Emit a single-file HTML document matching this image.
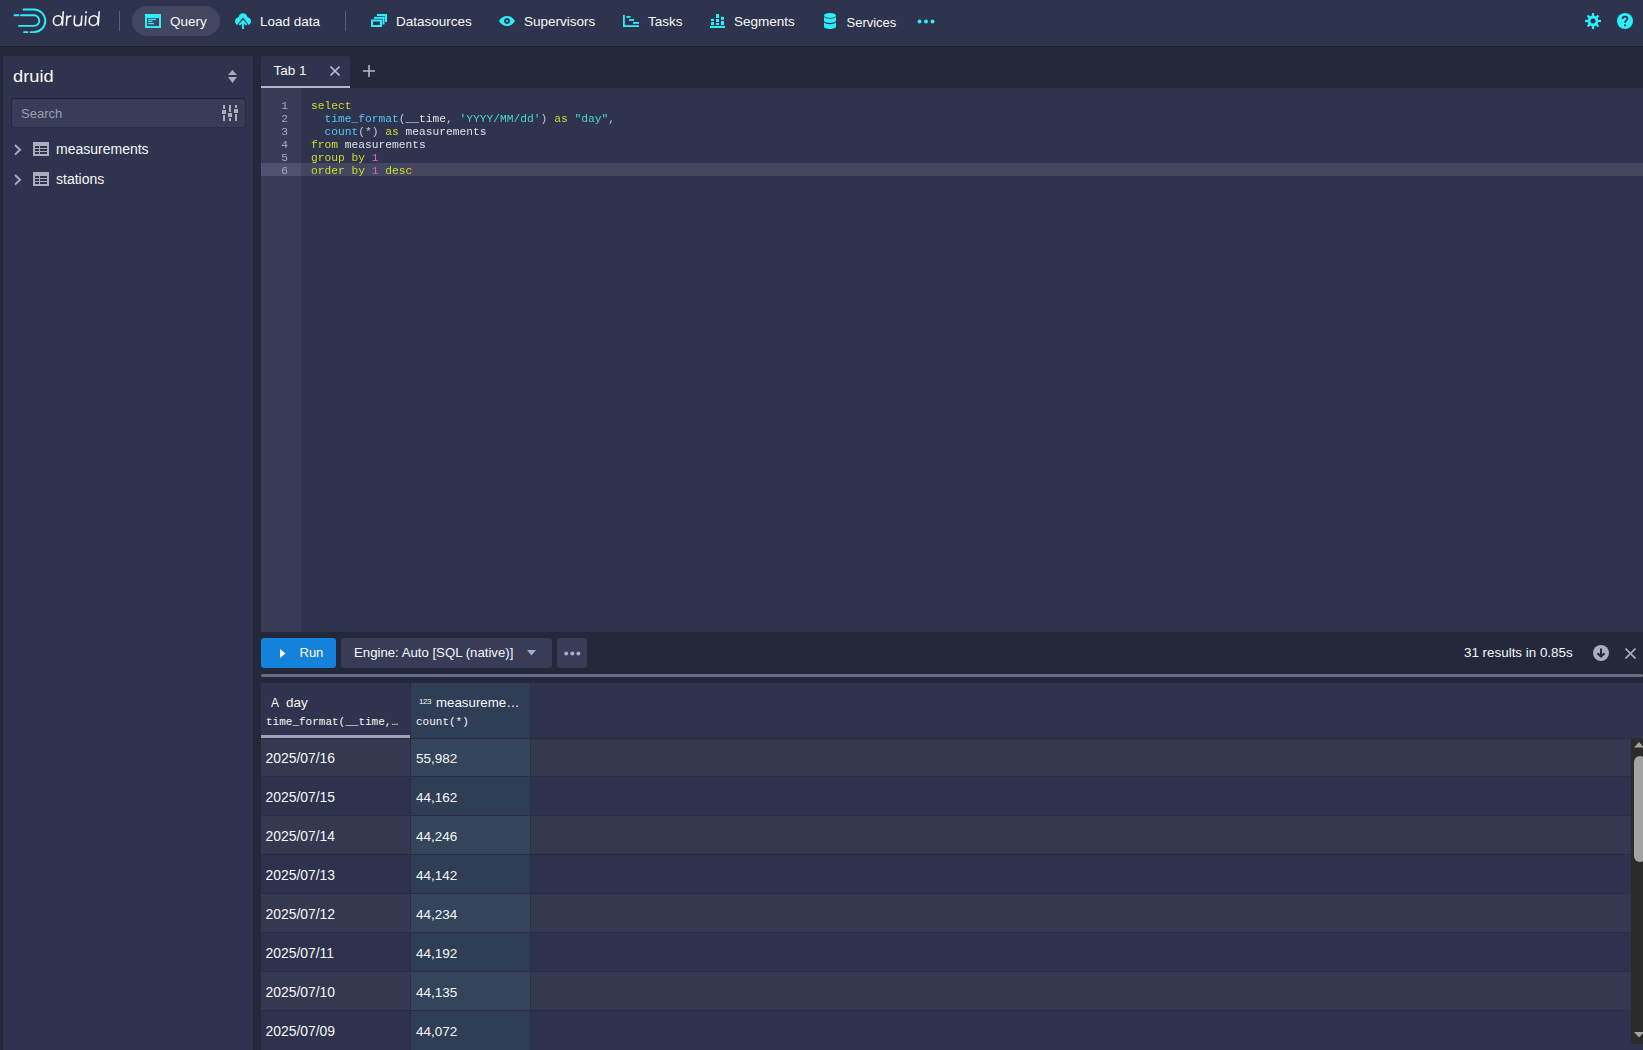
<!DOCTYPE html>
<html><head><meta charset="utf-8">
<style>
*{margin:0;padding:0;box-sizing:border-box}
html,body{width:1643px;height:1050px;overflow:hidden;background:#24283b;font-family:"Liberation Sans",sans-serif;color:#f5f8fa}
.a{position:absolute}
.t{position:absolute;white-space:nowrap;line-height:1}
svg{position:absolute;display:block}
.mono{font-family:"Liberation Mono",monospace}
#nav{left:0;top:0;width:1643px;height:46px;background:#2f344e;box-shadow:0 1px 1px rgba(16,18,30,.35)}
.nt{font-size:13.5px;color:#f5f8fa;top:15px}
.code{font-family:"Liberation Mono",monospace;font-size:11.25px;line-height:13px;color:#dde0ea;left:311px;white-space:pre;will-change:transform}
.kw{color:#cddc30}.fn{color:#52c6f2}.st{color:#48d6d2}.nu{color:#e35ec8}.pn{color:#c3c6d0}
.ln{font-family:"Liberation Mono",monospace;font-size:11.25px;line-height:13px;color:#a4a8ba;width:27px;text-align:right;left:261px;will-change:transform}
.row{left:261px;width:1370px;height:39px;border-bottom:1px solid #2a2d42}
.c1{font-size:13.9px;left:265.5px}
.c2{font-size:13.5px;left:416px}
</style></head>
<body>
<!-- NAVBAR -->
<div id="nav" class="a"></div>
<svg style="left:10px;top:6px" width="40" height="30" viewBox="0 0 40 30">
  <g fill="none" stroke="#2ceefb" stroke-width="1.9" stroke-linecap="round">
    <path d="M13.5 3.5 H24 A11.3 11.3 0 0 1 24 26.1 H20.5"/>
    <path d="M11 9.3 H24 A5.3 5.3 0 0 1 24 19.9 H9"/>
    <path d="M4.5 9.3 H8.5"/>
    <path d="M14 26.1 H17.5"/>
  </g>
</svg>
<svg style="left:0;top:0" width="110" height="40" viewBox="0 0 110 40">
  <g fill="none" stroke="#f5f8fa" stroke-width="1.55" transform="translate(0,26) skewX(-4) translate(0,-26)">
    <ellipse cx="57.4" cy="20.6" rx="4.4" ry="4.95"/>
    <path d="M62.3 11.2V25.8"/>
    <path d="M66.3 15.4V25.8 M66.3 19.8Q66.9 15.9 70.8 15.9"/>
    <path d="M73.9 15.4V21.4Q73.9 25.6 77.5 25.6Q81.1 25.6 81.1 21.4 M81.1 15.4V25.8"/>
    <path d="M85.2 15.4V25.8"/>
    <path d="M93.4 15.4"/>
    <ellipse cx="93.2" cy="20.6" rx="4.4" ry="4.95"/>
    <path d="M98.2 11.2V25.8"/>
  </g>
  <circle cx="86.1" cy="12.3" r="1" fill="#f5f8fa"/>
</svg>

<div class="a" style="left:119px;top:11px;width:1px;height:20px;background:rgba(255,255,255,.22)"></div>
<div class="a" style="left:132px;top:6px;width:88px;height:30px;border-radius:15px;background:#42465f"></div>
<!-- query icon -->
<svg style="left:145px;top:14px" width="16" height="14" viewBox="0 0 16 14">
  <path fill="#2ceefb" fill-rule="evenodd" d="M0 0H16V14H0Z M2 4V12H14V4Z"/>
  <rect x="3" y="4.8" width="8" height="1.3" fill="#2ceefb"/>
  <rect x="3" y="6.8" width="4.5" height="1.3" fill="#2ceefb"/>
  <rect x="3" y="9" width="6" height="1.3" fill="#2ceefb"/>
</svg>
<div class="t nt" style="left:170px">Query</div>

<!-- load data icon -->
<svg style="left:235px;top:13px" width="16" height="16" viewBox="0 0 16 16">
  <path fill="#2ceefb" d="M8 0.2C5.7 0.2 3.8 2 3.5 4.3 1.5 4.6 0 6.3 0 8.3 0 10 1 11.3 2.2 11.9L8 4.5 13.8 11.9C15 11.3 16 10 16 8.3 16 6.3 14.5 4.6 12.5 4.3 12.2 2 10.3 0.2 8 0.2Z"/>
  <path fill="none" stroke="#2ceefb" stroke-width="1.9" d="M8 8.6V16 M4.4 11.9L8 8.1 11.6 11.9"/>
</svg>
<div class="t nt" style="left:260px">Load data</div>

<div class="a" style="left:345px;top:11px;width:1px;height:20px;background:rgba(255,255,255,.22)"></div>

<!-- datasources icon -->
<svg style="left:371px;top:14px" width="16" height="13" viewBox="0 0 16 13">
  <g fill="#2ceefb">
    <path fill-rule="evenodd" d="M0 5.5H11V13H0Z M2 7.5V11H9V7.5Z"/>
    <rect x="3" y="2.8" width="10.5" height="2"/><rect x="11.5" y="2.8" width="2" height="7.7"/>
    <rect x="6" y="0" width="10" height="2"/><rect x="14" y="0" width="2" height="8"/>
  </g>
</svg>
<div class="t nt" style="left:396px">Datasources</div>

<!-- supervisors eye -->
<svg style="left:499px;top:16px" width="16" height="10" viewBox="0 0 16 10">
  <path fill="#2ceefb" fill-rule="evenodd" d="M0 5C2 1.8 4.8 0 8 0S14 1.8 16 5C14 8.2 11.2 10 8 10S2 8.2 0 5Z M8 2A3 3 0 1 0 8.01 2Z"/>
  <circle cx="8" cy="5" r="1.1" fill="#2ceefb"/>
</svg>
<div class="t nt" style="left:524px">Supervisors</div>

<!-- tasks gantt -->
<svg style="left:623px;top:15px" width="16" height="12" viewBox="0 0 16 12">
  <g fill="#2ceefb">
    <rect x="0" y="0" width="1.8" height="12"/>
    <rect x="0" y="10.2" width="16" height="1.8"/>
    <rect x="3.5" y="1" width="4" height="1.8"/>
    <rect x="6" y="4" width="5" height="1.8"/>
    <rect x="10" y="7" width="6" height="1.8"/>
  </g>
</svg>
<div class="t nt" style="left:648px">Tasks</div>

<!-- segments -->
<svg style="left:710px;top:14px" width="15" height="14" viewBox="0 0 15 14">
  <g fill="#2ceefb">
    <rect x="0" y="11.9" width="15" height="2.1"/>
    <rect x="1" y="4.9" width="3" height="2.1"/><rect x="1" y="8" width="3" height="3"/>
    <rect x="6" y="0" width="3" height="4"/><rect x="6" y="5" width="3" height="3"/><rect x="6" y="9" width="3" height="2"/>
    <rect x="11" y="2.8" width="3" height="3.1"/><rect x="11" y="7" width="3" height="4"/>
  </g>
</svg>
<div class="t nt" style="left:734px">Segments</div>

<!-- services database -->
<svg style="left:824px;top:13px" width="12" height="16" viewBox="0 0 12 16">
  <g fill="#2ceefb">
    <ellipse cx="6" cy="2.5" rx="6" ry="2.5"/>
    <path d="M0 3.8C0.8 5 3.2 5.8 6 5.8S11.2 5 12 3.8V8C11.2 9.2 8.8 10 6 10S0.8 9.2 0 8Z"/>
    <path d="M0 9.3C0.8 10.5 3.2 11.3 6 11.3S11.2 10.5 12 9.3V13.5C12 14.9 9.3 16 6 16S0 14.9 0 13.5Z"/>
  </g>
</svg>
<div class="t nt" style="left:846.5px;font-size:13px;top:15.5px">Services</div>

<svg style="left:917px;top:19px" width="18" height="5" viewBox="0 0 18 5">
  <g fill="#2ceefb"><circle cx="2.5" cy="2.5" r="2"/><circle cx="9" cy="2.5" r="2"/><circle cx="15.5" cy="2.5" r="2"/></g>
</svg>

<!-- gear -->
<svg style="left:1585px;top:13px" width="16" height="16" viewBox="0 0 16 16">
  <g fill="#2ceefb">
    <path fill-rule="evenodd" d="M8 2.6A5.4 5.4 0 1 1 7.99 2.6Z M8 5.4A2.6 2.6 0 1 0 8.01 5.4Z"/>
    <g id="teeth"><rect x="6.9" y="0" width="2.2" height="4"/><rect x="6.9" y="12" width="2.2" height="4"/><rect x="0" y="6.9" width="4" height="2.2"/><rect x="12" y="6.9" width="4" height="2.2"/></g>
    <g transform="rotate(45 8 8)"><rect x="6.9" y="0.3" width="2.2" height="4"/><rect x="6.9" y="11.7" width="2.2" height="4"/><rect x="0.3" y="6.9" width="4" height="2.2"/><rect x="11.7" y="6.9" width="4" height="2.2"/></g>
  </g>
</svg>
<!-- help -->
<svg style="left:1617px;top:13px" width="16" height="16" viewBox="0 0 16 16">
  <circle cx="8" cy="8" r="8" fill="#2ceefb"/>
  <path fill="none" stroke="#2f344e" stroke-width="1.7" d="M5.6 6C5.6 4.6 6.6 3.7 8 3.7S10.4 4.6 10.4 5.9C10.4 7.4 8.1 7.6 8.1 9.5V10"/>
  <rect x="7.1" y="11.3" width="1.9" height="1.9" fill="#2f344e"/>
</svg>

<!-- SIDEBAR -->
<div class="a" style="left:3px;top:56px;width:250px;height:1000px;background:#2f334e;border-radius:2px 2px 0 0"></div>
<div class="t" style="left:13px;top:68px;font-size:17px;transform:scaleX(1.075);transform-origin:0 0">druid</div>
<svg style="left:227px;top:69px" width="11" height="15" viewBox="0 0 11 15">
  <g fill="#a9adc0"><path d="M5.5 1L10 6H1Z"/><path d="M1 8H10L5.5 14Z"/></g>
</svg>
<div class="a" style="left:11px;top:98px;width:235px;height:30px;background:#383c56;border-radius:3px;box-shadow:inset 0 0 0 1px rgba(16,18,30,.35),inset 0 1px 1px rgba(16,18,30,.4)"></div>
<div class="t" style="left:21px;top:107px;font-size:13px;color:#9a9eb3">Search</div>
<svg style="left:222px;top:104px" width="17" height="17" viewBox="0 0 17 17">
  <g fill="#a9adc0">
    <rect x="1" y="1" width="2" height="4"/><rect x="0" y="6" width="4" height="4"/><rect x="1" y="11" width="2" height="6"/>
    <rect x="7" y="1" width="2" height="7"/><rect x="6" y="9" width="4" height="4"/><rect x="7" y="14" width="2" height="3"/>
    <rect x="13" y="1" width="2" height="3"/><rect x="12" y="5" width="4" height="4"/><rect x="13" y="10" width="2" height="7"/>
  </g>
</svg>
<!-- tree -->
<svg style="left:13px;top:144px" width="9" height="12" viewBox="0 0 9 12"><path fill="none" stroke="#a9adc0" stroke-width="1.9" d="M2 1L7 5.8 2 10.6"/></svg>
<svg style="left:33px;top:142px" width="16" height="14" viewBox="0 0 16 14"><path fill="#a9adc0" fill-rule="evenodd" d="M0 0H16V14H0Z M2 4V6H6V4Z M7 4V6H14V4Z M2 7V9H6V7Z M7 7V9H14V7Z M2 10V12H6V10Z M7 10V12H14V10Z"/></svg>
<div class="t" style="left:56px;top:142px;font-size:14px">measurements</div>
<svg style="left:13px;top:174px" width="9" height="12" viewBox="0 0 9 12"><path fill="none" stroke="#a9adc0" stroke-width="1.9" d="M2 1L7 5.8 2 10.6"/></svg>
<svg style="left:33px;top:172px" width="16" height="14" viewBox="0 0 16 14"><path fill="#a9adc0" fill-rule="evenodd" d="M0 0H16V14H0Z M2 4V6H6V4Z M7 4V6H14V4Z M2 7V9H6V7Z M7 7V9H14V7Z M2 10V12H6V10Z M7 10V12H14V10Z"/></svg>
<div class="t" style="left:56px;top:172px;font-size:14px">stations</div>

<!-- TABS -->
<div class="a" style="left:261px;top:56px;width:89px;height:32px;background:#2f334e;border-radius:3px 3px 0 0"></div>
<div class="a" style="left:261px;top:85.5px;width:89px;height:2.5px;background:#b4b8ca"></div>
<div class="t" style="left:273.5px;top:64px;font-size:13.5px">Tab 1</div>
<svg style="left:330px;top:66px" width="10" height="10" viewBox="0 0 10 10"><path stroke="#b4b8ca" stroke-width="1.6" d="M0.5 0.5L9.5 9.5M9.5 0.5L0.5 9.5"/></svg>
<svg style="left:363px;top:65px" width="12" height="12" viewBox="0 0 12 12"><path stroke="#b4b8ca" stroke-width="1.6" d="M6 0V12M0 6H12"/></svg>

<!-- EDITOR -->
<div class="a" style="left:261px;top:88px;width:1382px;height:544px;background:#2f334e"></div>
<div class="a" style="left:261px;top:88px;width:40px;height:544px;background:#383b55"></div>
<div class="a" style="left:261px;top:163px;width:40px;height:13px;background:#4e5270"></div>
<div class="a" style="left:301px;top:163px;width:1342px;height:13px;background:#42465f"></div>
<div class="a ln" style="top:99.5px">1<br>2<br>3<br>4<br>5<br>6</div>
<div class="a code" style="top:99.5px"><span class="kw">select</span>
  <span class="fn">time_format</span><span class="pn">(</span>__time<span class="pn">,</span> <span class="st">'YYYY/MM/dd'</span><span class="pn">)</span> <span class="kw">as</span> <span class="st">"day"</span><span class="pn">,</span>
  <span class="fn">count</span><span class="pn">(*)</span> <span class="kw">as</span> measurements
<span class="kw">from</span> measurements
<span class="kw">group by</span> <span class="nu">1</span>
<span class="kw">order by</span> <span class="nu">1</span> <span class="kw">desc</span></div>
<div class="a" style="left:412px;top:163px;width:1px;height:13px;background:#8a3448"></div>

<!-- RUN BAR -->
<div class="a" style="left:261px;top:638px;width:75px;height:30px;background:#1482da;border-radius:3px"></div>
<svg style="left:280px;top:649px" width="6" height="9" viewBox="0 0 6 9"><path fill="#fff" d="M0 0L5.5 4.5 0 9Z"/></svg>
<div class="t" style="left:299.5px;top:646px;font-size:13px;color:#fff">Run</div>
<div class="a" style="left:341px;top:638px;width:211px;height:30px;background:#383c56;border-radius:3px"></div>
<div class="t" style="left:354px;top:646px;font-size:13.2px">Engine: Auto [SQL (native)]</div>
<svg style="left:527px;top:650px" width="9" height="6" viewBox="0 0 9 6"><path fill="#a9adc0" d="M0 0H9L4.5 5.5Z"/></svg>
<div class="a" style="left:557px;top:638px;width:30px;height:30px;background:#383c56;border-radius:3px"></div>
<svg style="left:564px;top:651px" width="17" height="5" viewBox="0 0 17 5"><g fill="#a9adc0"><circle cx="2.2" cy="2.5" r="2"/><circle cx="8.3" cy="2.5" r="2"/><circle cx="14.4" cy="2.5" r="2"/></g></svg>
<div class="t" style="left:1464px;top:646px;font-size:13.4px">31 results in 0.85s</div>
<svg style="left:1593px;top:645px" width="16" height="16" viewBox="0 0 16 16"><circle cx="8" cy="8" r="8" fill="#a9adc0"/><path fill="none" stroke="#24283b" stroke-width="2" d="M8 3.5V11.8M4.5 8.2L8 11.7 11.5 8.2"/></svg>
<svg style="left:1625px;top:648px" width="11" height="11" viewBox="0 0 11 11"><path stroke="#a9adc0" stroke-width="1.6" d="M0.5 0.5L10.5 10.5M10.5 0.5L0.5 10.5"/></svg>
<div class="a" style="left:261px;top:674px;width:1382px;height:3px;background:#666b87;border-radius:2px"></div>

<!-- RESULTS TABLE -->
<div class="a" style="left:261px;top:683px;width:1382px;height:367px;background:#2f334d"></div>
<div class="a" style="left:410px;top:683px;width:1px;height:367px;background:#2a2d42"></div>
<div class="a" style="left:411px;top:683px;width:119px;height:367px;background:#2f3d55"></div>
<div class="a" style="left:261px;top:735px;width:149px;height:3px;background:#9ea2b6"></div>
<div class="t" style="left:271px;top:696.5px;font-size:12px">A</div>
<div class="t" style="left:286px;top:696px;font-size:13.5px">day</div>
<div class="t mono" style="left:266px;top:717px;font-size:11px">time_format(__time,…</div>
<div class="t" style="left:419px;top:698px;font-size:8px;letter-spacing:-.5px">123</div>
<div class="t" style="left:436px;top:696px;font-size:13.3px">measureme…</div>
<div class="t mono" style="left:416px;top:717px;font-size:11px">count(*)</div>

<div class="a" style="left:261px;top:738px;width:1370px;height:39px;background:#353851"></div>
<div class="a" style="left:411px;top:738px;width:119px;height:39px;background:#34445a"></div>
<div class="a" style="left:261px;top:776px;width:1370px;height:1px;background:#2a2d42"></div>
<div class="t c1" style="top:752px">2025/07/16</div>
<div class="t c2" style="top:752px">55,982</div>
<div class="a" style="left:261px;top:777px;width:1370px;height:39px;background:#2f324c"></div>
<div class="a" style="left:411px;top:777px;width:119px;height:39px;background:#2f3d55"></div>
<div class="a" style="left:261px;top:815px;width:1370px;height:1px;background:#2a2d42"></div>
<div class="t c1" style="top:791px">2025/07/15</div>
<div class="t c2" style="top:791px">44,162</div>
<div class="a" style="left:261px;top:816px;width:1370px;height:39px;background:#353851"></div>
<div class="a" style="left:411px;top:816px;width:119px;height:39px;background:#34445a"></div>
<div class="a" style="left:261px;top:854px;width:1370px;height:1px;background:#2a2d42"></div>
<div class="t c1" style="top:830px">2025/07/14</div>
<div class="t c2" style="top:830px">44,246</div>
<div class="a" style="left:261px;top:855px;width:1370px;height:39px;background:#2f324c"></div>
<div class="a" style="left:411px;top:855px;width:119px;height:39px;background:#2f3d55"></div>
<div class="a" style="left:261px;top:893px;width:1370px;height:1px;background:#2a2d42"></div>
<div class="t c1" style="top:869px">2025/07/13</div>
<div class="t c2" style="top:869px">44,142</div>
<div class="a" style="left:261px;top:894px;width:1370px;height:39px;background:#353851"></div>
<div class="a" style="left:411px;top:894px;width:119px;height:39px;background:#34445a"></div>
<div class="a" style="left:261px;top:932px;width:1370px;height:1px;background:#2a2d42"></div>
<div class="t c1" style="top:908px">2025/07/12</div>
<div class="t c2" style="top:908px">44,234</div>
<div class="a" style="left:261px;top:933px;width:1370px;height:39px;background:#2f324c"></div>
<div class="a" style="left:411px;top:933px;width:119px;height:39px;background:#2f3d55"></div>
<div class="a" style="left:261px;top:971px;width:1370px;height:1px;background:#2a2d42"></div>
<div class="t c1" style="top:947px">2025/07/11</div>
<div class="t c2" style="top:947px">44,192</div>
<div class="a" style="left:261px;top:972px;width:1370px;height:39px;background:#353851"></div>
<div class="a" style="left:411px;top:972px;width:119px;height:39px;background:#34445a"></div>
<div class="a" style="left:261px;top:1010px;width:1370px;height:1px;background:#2a2d42"></div>
<div class="t c1" style="top:986px">2025/07/10</div>
<div class="t c2" style="top:986px">44,135</div>
<div class="a" style="left:261px;top:1011px;width:1370px;height:39px;background:#2f324c"></div>
<div class="a" style="left:411px;top:1011px;width:119px;height:39px;background:#2f3d55"></div>

<div class="t c1" style="top:1025px">2025/07/09</div>
<div class="t c2" style="top:1025px">44,072</div>
<div class="a" style="left:410px;top:738px;width:1px;height:312px;background:#2a2d42"></div>
<div class="a" style="left:530px;top:683px;width:1px;height:367px;background:#2a3044"></div>
<div class="a" style="left:261px;top:738px;width:1370px;height:1px;background:#292c40"></div>
<div class="a" style="left:1631px;top:738px;width:12px;height:306px;background:#2b2b2b"></div>
<div class="a" style="left:1634px;top:756px;width:12px;height:106px;background:#a3a3a3;border-radius:6px"></div>
<svg style="left:1634px;top:742px" width="10" height="6" viewBox="0 0 10 6"><path fill="#a3a3a3" d="M5 0L10 5.5H0Z"/></svg>
<svg style="left:1634px;top:1032px" width="10" height="6" viewBox="0 0 10 6"><path fill="#a3a3a3" d="M0 0H10L5 5.5Z"/></svg>

</body></html>
